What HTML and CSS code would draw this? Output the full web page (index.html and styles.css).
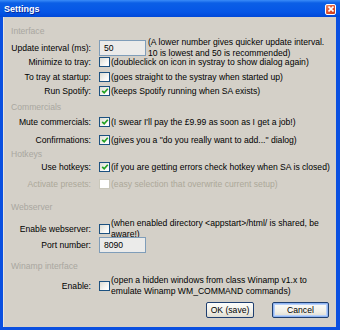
FILE: index.html
```html
<!DOCTYPE html>
<html>
<head>
<meta charset="utf-8">
<link rel="stylesheet" href="styles.css">
</head>
<body>
<div class="window">
  <div class="titlebar">
    <span class="title">Settings</span>
    <span class="close"><svg width="6" height="6" viewBox="0 0 6 6"><path d="M0.5 0.5 L5.5 5.5 M5.5 0.5 L0.5 5.5" stroke="#fff" stroke-width="1.6"/></svg></span>
  </div>
  <div class="client">
    <div class="head r-interface">Interface</div>
    <div class="row input-row r-update">
      <span class="label">Update interval (ms):</span>
      <div class="field"><span class="input">50</span><span class="note wide">(A lower number gives quicker update interval.<br>10 is lowest and 50 is recommended)</span></div>
    </div>
    <div class="row r-min">
      <span class="label">Minimize to tray:</span>
      <div class="field"><span class="cb"></span><span class="note">(doubleclick on icon in systray to show dialog again)</span></div>
    </div>
    <div class="row r-tray">
      <span class="label">To tray at startup:</span>
      <div class="field"><span class="cb"></span><span class="note">(goes straight to the systray when started up)</span></div>
    </div>
    <div class="row r-run">
      <span class="label">Run Spotify:</span>
      <div class="field"><span class="cb checked"><svg viewBox="0 0 8 8"><path d="M1.2 3.8 L3.2 5.8 L6.8 1.8" fill="none" stroke="#21a121" stroke-width="1.7"/></svg></span><span class="note">(keeps Spotify running when SA exists)</span></div>
    </div>
    <div class="head r-comm">Commercials</div>
    <div class="row r-mute">
      <span class="label">Mute commercials:</span>
      <div class="field"><span class="cb checked"><svg viewBox="0 0 8 8"><path d="M1.2 3.8 L3.2 5.8 L6.8 1.8" fill="none" stroke="#21a121" stroke-width="1.7"/></svg></span><span class="note">(I swear I'll pay the £9.99 as soon as I get a job!)</span></div>
    </div>
    <div class="row r-conf">
      <span class="label">Confirmations:</span>
      <div class="field"><span class="cb checked"><svg viewBox="0 0 8 8"><path d="M1.2 3.8 L3.2 5.8 L6.8 1.8" fill="none" stroke="#21a121" stroke-width="1.7"/></svg></span><span class="note">(gives you a "do you really want to add..." dialog)</span></div>
    </div>
    <div class="head r-hot">Hotkeys</div>
    <div class="row r-use">
      <span class="label">Use hotkeys:</span>
      <div class="field"><span class="cb checked"><svg viewBox="0 0 8 8"><path d="M1.2 3.8 L3.2 5.8 L6.8 1.8" fill="none" stroke="#21a121" stroke-width="1.7"/></svg></span><span class="note">(if you are getting errors check hotkey when SA is closed)</span></div>
    </div>
    <div class="row disabled r-act">
      <span class="label">Activate presets:</span>
      <div class="field"><span class="cb"></span><span class="note">(easy selection that overwrite current setup)</span></div>
    </div>
    <div class="head r-web">Webserver</div>
    <div class="row r-enweb">
      <span class="label">Enable webserver:</span>
      <div class="field"><span class="cb"></span><span class="note">(when enabled directory &lt;appstart&gt;/html/ is shared, be<br>aware!)</span></div>
    </div>
    <div class="row input-row r-port">
      <span class="label">Port number:</span>
      <div class="field"><span class="input">8090</span></div>
    </div>
    <div class="head r-winamp">Winamp interface</div>
    <div class="row r-enwin">
      <span class="label">Enable:</span>
      <div class="field"><span class="cb"></span><span class="note">(open a hidden windows from class Winamp v1.x to<br>emulate Winamp WM_COMMAND commands)</span></div>
    </div>
    <div class="buttons">
      <span class="btn">OK (save)</span>
      <span class="btn focus">Cancel</span>
    </div>
  </div>
</div>
</body>
</html>
```
FILE: styles.css
```css
html, body {
  margin: 0;
  padding: 0;
  background: #ffffff;
}
.window {
  width: 340px;
  height: 330px;
  background: #0a4fe0;
  display: flex;
  flex-direction: column;
  font-family: "Liberation Sans", Arial, sans-serif;
  font-size: 8.6px;
  color: #000;
}
.titlebar {
  height: 17px;
  flex: none;
  background: linear-gradient(#3a8cf8 0px, #0b5fe6 3px, #0556e6 12px, #0048d8 17px);
  display: flex;
  align-items: center;
  justify-content: space-between;
  padding: 0 4px 0 4px;
}
.title {
  color: #fff;
  font-weight: bold;
  font-size: 9px;
  margin-top: 1px;
  text-shadow: 1px 1px 0 #0a2a9a;
}
.close {
  width: 11px;
  height: 11px;
  box-sizing: border-box;
  border: 1px solid #fff;
  border-radius: 2px;
  background: linear-gradient(135deg, #f08a6a, #e0512d 50%, #c83a1a);
  display: flex;
  align-items: center;
  justify-content: center;
  margin-top: 1px;
}
.close svg { display: block; }
.client {
  flex: none;
  height: 310px;
  margin: 0 4px 0 3px;
  background: #d4d0c8;
  box-sizing: border-box;
  padding-top: 8px;
  border-left: 1px solid #e8e6e0;
}
.head {
  height: 12px;
  line-height: 12px;
  padding-left: 7px;
  color: #a9a7a0;
}
.row {
  height: 12px;
  display: grid;
  grid-template-columns: 87px 1fr;
  column-gap: 8px;
  align-items: center;
}
.input-row { height: 16px; }
.label {
  text-align: right;
  white-space: nowrap;
  line-height: 11px;
}
.field {
  display: flex;
  align-items: center;
  gap: 1px;
  white-space: nowrap;
  line-height: 11px;
}
.input {
  width: 47px;
  height: 16px;
  box-sizing: border-box;
  border: 1px solid #7f9db9;
  background: #ebebea;
  padding-left: 4px;
  line-height: 14px;
  flex: none;
}
.wide { margin-left: 1px; }
.cb {
  width: 11px;
  height: 10px;
  box-sizing: border-box;
  border: 1px solid #1c5180;
  background: linear-gradient(135deg, #dcdcd4, #fafaf8 70%, #ffffff);
  flex: none;
  display: flex;
  align-items: center;
  justify-content: center;
}
.cb svg { width: 8px; height: 8px; display: block; }
.disabled { color: #aca899; }
.disabled .cb {
  border-color: #cac8bb;
  background: #ffffff;
}
.r-interface { margin-top: 0; }
.r-update { margin-top: 0; }
.r-min { margin-top: 3px; }
.r-tray { margin-top: 3px; }
.r-run { margin-top: 2px; }
.r-comm { margin-top: 4px; }
.r-mute { margin-top: 3px; }
.r-conf { margin-top: 6px; }
.r-hot { margin-top: 2px; }
.r-use { margin-top: 1px; }
.r-act { margin-top: 5px; }
.r-web { margin-top: 11px; }
.r-enweb { margin-top: 5px; }
.r-port { margin-top: 7px; }
.r-winamp { margin-top: 7px; }
.r-enwin { margin-top: 3px; }
.buttons {
  margin-top: 15px;
  display: flex;
  justify-content: flex-end;
  gap: 18px;
  padding-right: 7px;
}
.btn {
  height: 16px;
  box-sizing: border-box;
  border: 1px solid #1f3f70;
  border-radius: 2px;
  background: linear-gradient(#fdfdfb, #f0efe8 60%, #dedcd2);
  display: flex;
  align-items: center;
  justify-content: center;
  width: 48px;
}
.btn.focus {
  width: 57px;
  box-shadow: inset 0 0 0 1px #8fb4f2, inset 0 0 0 2px #b8d0f8;
}
```
